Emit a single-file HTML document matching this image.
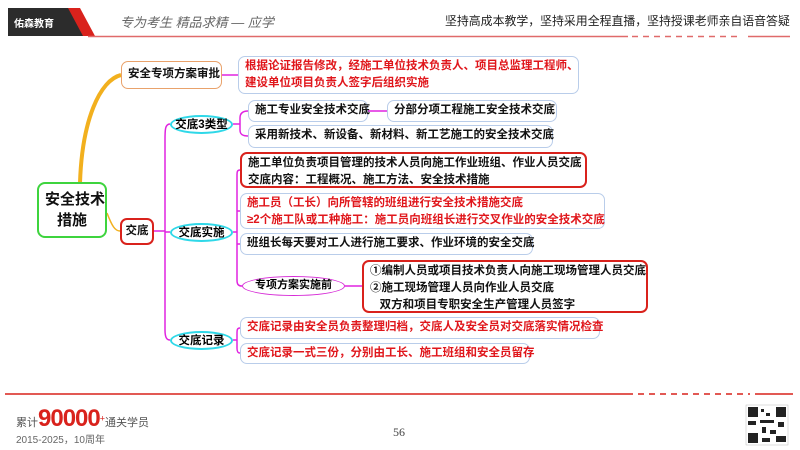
<!DOCTYPE html>
<html><head><meta charset="utf-8">
<style>
body{margin:0;width:800px;height:450px;background:#fff;position:relative;overflow:hidden;font-family:"Liberation Sans","Noto Sans CJK SC",sans-serif;}
.b{position:absolute;box-sizing:border-box;border-radius:7px;background:#fff;font-weight:bold;font-size:11.5px;line-height:17px;padding:1px 6px;white-space:nowrap;color:#111;}
.bl{border:1.5px solid #b9cdea;}
.rd{border:2px solid #d9221c;}
.r{color:#e0161b;}
.el{position:absolute;box-sizing:border-box;border-radius:50%;background:#fff;font-weight:bold;font-size:11.5px;text-align:center;white-space:nowrap;}
.ab{position:absolute;white-space:nowrap;}
</style></head><body>
<svg style="position:absolute;left:0;top:0" width="800" height="450">
<polygon points="8,8 75,8 88,36 8,36" fill="#2c2c2c"/>
<polygon points="68,8 80,8 95,36 83,36" fill="#d9221c"/>
<line x1="88" y1="36.5" x2="628" y2="36.5" stroke="#e06a6a" stroke-width="1.5"/>
<line x1="632" y1="36.5" x2="742" y2="36.5" stroke="#e06a6a" stroke-width="1.5" stroke-dasharray="6,5"/>
<line x1="748" y1="36.5" x2="790" y2="36.5" stroke="#e06a6a" stroke-width="1.5"/>
<path d="M80,183 C82,120 100,80 121,75" stroke="#f2b01e" stroke-width="4" fill="none"/>
<path d="M107,213 C112,226 115,231 120,231" stroke="#f2b01e" stroke-width="1.5" fill="none"/>
<g stroke="#e024e0" stroke-width="1.5" fill="none">
<line x1="222" y1="75" x2="238" y2="75"/>
<path d="M154,231 L165,231 M170,124 C165,124 165,130 165,140 L165,330 C165,338 167,340 170,340 M165,232 L170,232"/>
<path d="M233,124 L240,124 M248,111 C242,111 240,114 240,118 L240,130 C240,134 242,136 248,136"/>
<line x1="368" y1="111" x2="387" y2="111"/>
<path d="M233,232 L237,232 M240,170 C237,170 237,172 237,176 L237,280 C237,284 238,286 242,286 M237,211 L240,211 M237,244 L240,244"/>
<path d="M345,286 L362,286"/>
<path d="M233,340 L237,340 M240,328 C237,328 237,330 237,334 L237,348 C237,352 238,353 240,353"/>
</g>
<line x1="5" y1="394" x2="633" y2="394" stroke="#d9221c" stroke-width="1.5"/>
<line x1="638" y1="394" x2="750" y2="394" stroke="#d9221c" stroke-width="1.5" stroke-dasharray="6,5"/>
<line x1="755" y1="394" x2="793" y2="394" stroke="#d9221c" stroke-width="1.5"/>
<rect x="746" y="405" width="42" height="40" fill="#fff" stroke="#bbb" stroke-width="0.5"/>
<g fill="#222"><rect x="748" y="407" width="10" height="10"/><rect x="776" y="407" width="10" height="10"/><rect x="748" y="433" width="10" height="10"/>
<rect x="761" y="409" width="3" height="3"/><rect x="766" y="413" width="4" height="3"/><rect x="760" y="420" width="14" height="3"/><rect x="762" y="427" width="4" height="6"/><rect x="770" y="430" width="6" height="4"/><rect x="778" y="422" width="6" height="5"/><rect x="762" y="438" width="8" height="4"/><rect x="776" y="436" width="10" height="6"/><rect x="748" y="421" width="8" height="4"/></g>
</svg>
<div class="ab" style="left:14px;top:15px;color:#fff;font-size:10px;font-weight:bold">佑森教育</div>
<div class="ab" style="left:120px;top:12px;color:#666;font-size:13px;font-style:italic">专为考生 精品求精 — 应学</div>
<div class="ab" style="left:445px;top:12px;font-size:11.9px;color:#222">坚持高成本教学，坚持采用全程直播，坚持授课老师亲自语音答疑</div>

<div class="b" style="left:37px;top:182px;width:70px;height:56px;border:2px solid #3ed43e;border-radius:8px;font-size:15px;line-height:21px;text-align:center;padding-top:5px">安全技术<br>措施</div>
<div class="b" style="left:121px;top:61px;width:101px;height:28px;border:1.5px solid #e9a26b;padding-top:4px">安全专项方案审批</div>
<div class="b bl r" style="left:238px;top:56px;width:341px;height:38px">根据论证报告修改，经施工单位技术负责人、项目总监理工程师、<br>建设单位项目负责人签字后组织实施</div>
<div class="b rd" style="left:120px;top:218px;width:34px;height:27px;padding:3px 0;text-align:center">交底</div>
<div class="el" style="left:170px;top:115px;width:63px;height:19px;border:2px solid #2fd8e8;line-height:16px">交底3类型</div>
<div class="el" style="left:170px;top:223px;width:63px;height:19px;border:2px solid #2fd8e8;line-height:16px">交底实施</div>
<div class="el" style="left:170px;top:331px;width:63px;height:19px;border:2px solid #2fd8e8;line-height:16px">交底记录</div>
<div class="b bl" style="left:248px;top:100px;width:120px;height:22px">施工专业安全技术交底</div>
<div class="b bl" style="left:387px;top:100px;width:170px;height:22px">分部分项工程施工安全技术交底</div>
<div class="b bl" style="left:248px;top:125px;width:305px;height:23px">采用新技术、新设备、新材料、新工艺施工的安全技术交底</div>
<div class="b rd" style="left:240px;top:152px;width:347px;height:36px">施工单位负责项目管理的技术人员向施工作业班组、作业人员交底<br>交底内容：工程概况、施工方法、安全技术措施</div>
<div class="b bl r" style="left:240px;top:193px;width:365px;height:36px">施工员（工长）向所管辖的班组进行安全技术措施交底<br>≥2个施工队或工种施工：施工员向班组长进行交叉作业的安全技术交底</div>
<div class="b bl" style="left:240px;top:233px;width:293px;height:22px">班组长每天要对工人进行施工要求、作业环境的安全交底</div>
<div class="el" style="left:242px;top:276px;width:103px;height:20px;border:1.5px solid #d62ad6;line-height:17px;font-size:11px">专项方案实施前</div>
<div class="b rd" style="left:362px;top:260px;width:286px;height:53px;overflow:hidden">①编制人员或项目技术负责人向施工现场管理人员交底<br>②施工现场管理人员向作业人员交底<br>&nbsp;&nbsp;&nbsp;双方和项目专职安全生产管理人员签字</div>
<div class="b bl r" style="left:240px;top:317px;width:360px;height:22px">交底记录由安全员负责整理归档，交底人及安全员对交底落实情况检查</div>
<div class="b bl r" style="left:240px;top:343px;width:290px;height:21px">交底记录一式三份，分别由工长、施工班组和安全员留存</div>

<div class="ab" style="left:16px;top:405px;font-size:11px;color:#555">累计<span style="color:#d9221c;font-size:24px;font-weight:bold;letter-spacing:-1px">90000</span><sup style="color:#d9221c;font-size:9px">+</sup>通关学员</div>
<div class="ab" style="left:16px;top:431px;font-size:10px;color:#666">2015-2025，10周年</div>
<div class="ab" style="left:393px;top:425px;font-size:12px;color:#444;font-family:'Liberation Serif',serif">56</div>
</body></html>
